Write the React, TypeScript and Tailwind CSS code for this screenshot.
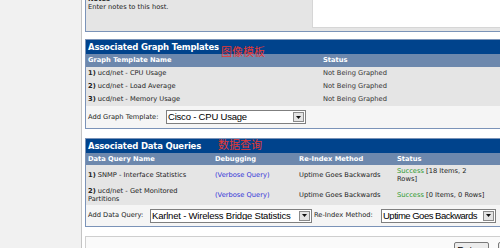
import React from 'react'

const graphTemplates = ['ucd/net - CPU Usage', 'ucd/net - Load Average', 'ucd/net - Memory Usage']

function Arrow() {
  return (
    <span className="mr-[1px] flex h-[10px] w-[11px] shrink-0 items-center justify-center border border-[#8a8a8a] bg-[#e4e4e4]">
      <svg width="5" height="3" viewBox="0 0 5 3">
        <path d="M0 0h5L2.5 3z" fill="#111" />
      </svg>
    </span>
  )
}

function Select({ value, className, tight }: { value: string; className: string; tight?: boolean }) {
  return (
    <div className={`flex h-[14px] shrink-0 items-center border border-[#7f7f7f] bg-white ${className}`}>
      <span
        className={`flex-1 overflow-hidden whitespace-nowrap pl-[1px] font-['Liberation_Sans',Arial,sans-serif] text-[9.5px] leading-none text-black ${
          tight ? 'tracking-[-0.5px]' : 'tracking-[-0.2px]'
        }`}
      >
        {value}
      </span>
      <Arrow />
    </div>
  )
}

function BoxTitle({ title }: { title: string }) {
  return (
    <div className="flex h-[14px] items-center bg-[#00438c] pl-[2px] text-[8.5px] font-bold tracking-[-0.2px] text-white">
      {title}
    </div>
  )
}

export default function App() {
  return (
    <div className="relative flex h-[248px] w-[500px] overflow-hidden bg-white font-['DejaVu_Sans',Verdana,sans-serif] text-[6.7px] text-[#222]">
      {/* left nav strip */}
      <div className="h-full w-[82px] shrink-0 border-r border-[#c4c4c4] bg-[#f1f1f1]" />

      <div className="ml-[3px] w-[470px] shrink-0">
        {/* Notes */}
        <div className="-mt-[10px] flex h-[42px] border-b border-l border-[#7b93b8] bg-[#e5e5e5]">
          <div className="w-[226px] shrink-0 pl-[2px] pt-[5px] leading-[8px]">
            <div className="font-bold">Notes</div>
            <div>Enter notes to this host.</div>
          </div>
          <div className="flex-1">
            <div className="h-[38px] border-b border-l border-[#d6d6d6] bg-white" />
          </div>
        </div>

        {/* Associated Graph Templates */}
        <div className="mt-[7px] border border-[#7b93b8]">
          <BoxTitle title="Associated Graph Templates" />
          <div className="grid h-[13px] grid-cols-[235px_1fr] items-center bg-[#6d88ad] font-bold text-white">
            <span className="pl-[2px]">Graph Template Name</span>
            <span className="pl-[2px]">Status</span>
          </div>
          {graphTemplates.map((name, i) => (
            <div key={name} className="grid h-[13px] grid-cols-[235px_1fr] items-center bg-[#e5e5e5]">
              <span className="pl-[2px]">
                <b>{i + 1})</b> {name}
              </span>
              <span className="pl-[2px] text-[#333]">Not Being Graphed</span>
            </div>
          ))}
          <div className="flex h-[22px] items-center bg-[#f5f5f5] pl-[2px]">
            <span className="w-[78px] shrink-0">Add Graph Template:</span>
            <Select value="Cisco - CPU Usage" className="w-[140px]" />
          </div>
        </div>

        {/* Associated Data Queries */}
        <div className="mt-[9px] border border-[#7b93b8]">
          <BoxTitle title="Associated Data Queries" />
          <div className="grid h-[12px] grid-cols-[127px_84px_98px_96px_1fr] items-center bg-[#6d88ad] font-bold text-white">
            <span className="pl-[2px]">Data Query Name</span>
            <span className="pl-[2px]">Debugging</span>
            <span className="pl-[2px]">Re-Index Method</span>
            <span className="pl-[2px]">Status</span>
            <span />
          </div>
          <div className="grid h-[20px] grid-cols-[127px_84px_98px_96px_1fr] items-center bg-[#e5e5e5] leading-[8px]">
            <span className="pl-[2px]">
              <b>1)</b> SNMP - Interface Statistics
            </span>
            <span className="pl-[2px] text-[#3535d8]">(Verbose Query)</span>
            <span className="pl-[2px]">Uptime Goes Backwards</span>
            <span className="pl-[2px]">
              <span className="text-[#2f9a2f]">Success</span> [18 Items, 2
              <br />
              Rows]
            </span>
            <span />
          </div>
          <div className="grid h-[20px] grid-cols-[127px_84px_98px_96px_1fr] items-center bg-[#e5e5e5] leading-[8px]">
            <span className="pl-[2px]">
              <b>2)</b> ucd/net - Get Monitored
              <br />
              Partitions
            </span>
            <span className="pl-[2px] text-[#3535d8]">(Verbose Query)</span>
            <span className="pl-[2px]">Uptime Goes Backwards</span>
            <span className="whitespace-nowrap pl-[2px]">
              <span className="text-[#2f9a2f]">Success</span> [0 Items, 0 Rows]
            </span>
            <span />
          </div>
          <div className="flex h-[21px] items-center bg-[#f5f5f5] pl-[2px]">
            <span className="w-[62px] shrink-0">Add Data Query:</span>
            <Select value="Karlnet - Wireless Bridge Statistics" className="w-[162px]" />
            <span className="w-[69px] shrink-0 pl-[2px]">Re-Index Method:</span>
            <Select value="Uptime Goes Backwards" className="w-[115px]" tight />
          </div>
        </div>

        {/* save row */}
        <div className="mt-[9px] flex justify-end gap-[9px] border-l border-t border-[#cfcfcf] bg-[#fafafa] pr-[13px] pt-[5px]">
          <button className="h-[16px] w-[35px] rounded-[2px] border border-[#7a7a7a] bg-[#ececec] font-['Liberation_Sans',Arial,sans-serif] text-[9.5px] leading-none text-black">
            Return
          </button>
          <button className="h-[16px] w-[44px] rounded-[2px] border border-[#7a7a7a] bg-[#ececec] font-['Liberation_Sans',Arial,sans-serif] text-[9.5px] leading-none text-black">
            Save
          </button>
        </div>
      </div>

      {/* red annotations */}
      <span className="absolute left-[221px] top-[46px] font-['Noto_Sans_CJK_SC',sans-serif] text-[11px] leading-none text-[#e53935]">
        图像模板
      </span>
      <span className="absolute left-[218px] top-[139px] font-['Noto_Sans_CJK_SC',sans-serif] text-[11px] leading-none text-[#e53935]">
        数据查询
      </span>
    </div>
  )
}
